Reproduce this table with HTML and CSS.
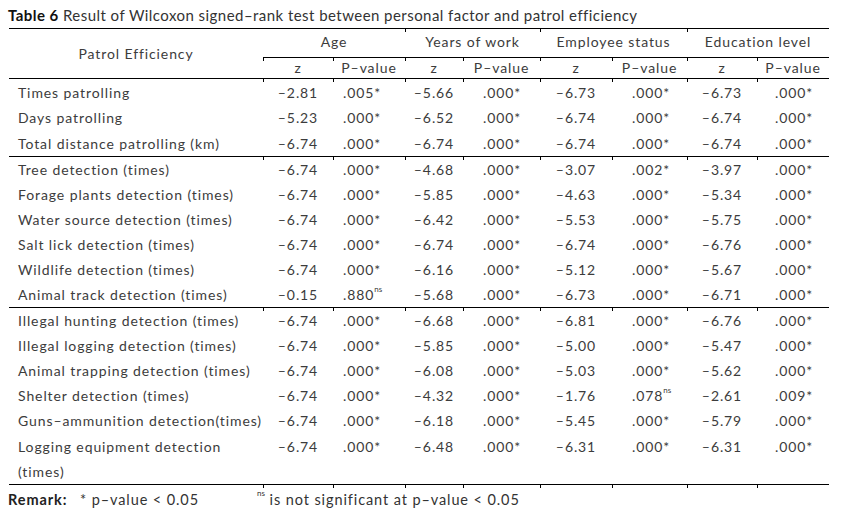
FILE: index.html
```html
<!DOCTYPE html>
<html>
<head>
<meta charset="utf-8">
<link rel="stylesheet" href="styles.css">
</head>
<body>
<div class="page">
  <p class="title"><b>Table 6</b> Result of Wilcoxon signed–rank test between personal factor and patrol efficiency</p>
  <table class="stats">
    <colgroup>
      <col class="c-label"><col class="c-z1"><col class="c-p1"><col class="c-z2"><col class="c-p2"><col class="c-z3"><col class="c-p3"><col class="c-z4"><col class="c-p4">
    </colgroup>
    <thead>
      <tr class="grp">
        <th rowspan="2" class="label-h">Patrol Efficiency</th>
        <th colspan="2" class="tk">Age</th>
        <th colspan="2" class="tk">Years of work</th>
        <th colspan="2" class="tk">Employee status</th>
        <th colspan="2" class="tk">Education level</th>
      </tr>
      <tr class="sub">
        <th class="tk">z</th><th class="tk">P–value</th>
        <th class="tk">z</th><th class="tk">P–value</th>
        <th class="tk">z</th><th class="tk">P–value</th>
        <th class="tk">z</th><th class="tk">P–value</th>
      </tr>
    </thead>
    <tbody class="sec first">
      <tr><td>Times patrolling</td><td>–2.81</td><td>.005*</td><td>–5.66</td><td>.000*</td><td>–6.73</td><td>.000*</td><td>–6.73</td><td>.000*</td></tr>
      <tr><td>Days patrolling</td><td>–5.23</td><td>.000*</td><td>–6.52</td><td>.000*</td><td>–6.74</td><td>.000*</td><td>–6.74</td><td>.000*</td></tr>
      <tr><td>Total distance patrolling (km)</td><td>–6.74</td><td>.000*</td><td>–6.74</td><td>.000*</td><td>–6.74</td><td>.000*</td><td>–6.74</td><td>.000*</td></tr>
    </tbody>
    <tbody class="sec">
      <tr><td>Tree detection (times)</td><td>–6.74</td><td>.000*</td><td>–4.68</td><td>.000*</td><td>–3.07</td><td>.002*</td><td>–3.97</td><td>.000*</td></tr>
      <tr><td>Forage plants detection (times)</td><td>–6.74</td><td>.000*</td><td>–5.85</td><td>.000*</td><td>–4.63</td><td>.000*</td><td>–5.34</td><td>.000*</td></tr>
      <tr><td>Water source detection (times)</td><td>–6.74</td><td>.000*</td><td>–6.42</td><td>.000*</td><td>–5.53</td><td>.000*</td><td>–5.75</td><td>.000*</td></tr>
      <tr><td>Salt lick detection (times)</td><td>–6.74</td><td>.000*</td><td>–6.74</td><td>.000*</td><td>–6.74</td><td>.000*</td><td>–6.76</td><td>.000*</td></tr>
      <tr><td>Wildlife detection (times)</td><td>–6.74</td><td>.000*</td><td>–6.16</td><td>.000*</td><td>–5.12</td><td>.000*</td><td>–5.67</td><td>.000*</td></tr>
      <tr><td>Animal track detection (times)</td><td>–0.15</td><td>.880<sup>ns</sup></td><td>–5.68</td><td>.000*</td><td>–6.73</td><td>.000*</td><td>–6.71</td><td>.000*</td></tr>
    </tbody>
    <tbody class="sec">
      <tr><td>Illegal hunting detection (times)</td><td>–6.74</td><td>.000*</td><td>–6.68</td><td>.000*</td><td>–6.81</td><td>.000*</td><td>–6.76</td><td>.000*</td></tr>
      <tr><td>Illegal logging detection (times)</td><td>–6.74</td><td>.000*</td><td>–5.85</td><td>.000*</td><td>–5.00</td><td>.000*</td><td>–5.47</td><td>.000*</td></tr>
      <tr><td>Animal trapping detection (times)</td><td>–6.74</td><td>.000*</td><td>–6.08</td><td>.000*</td><td>–5.03</td><td>.000*</td><td>–5.62</td><td>.000*</td></tr>
      <tr><td>Shelter detection (times)</td><td>–6.74</td><td>.000*</td><td>–4.32</td><td>.000*</td><td>–1.76</td><td>.078<sup>ns</sup></td><td>–2.61</td><td>.009*</td></tr>
      <tr><td>Guns–ammunition detection(times)</td><td>–6.74</td><td>.000*</td><td>–6.18</td><td>.000*</td><td>–5.45</td><td>.000*</td><td>–5.79</td><td>.000*</td></tr>
      <tr class="tall"><td>Logging equipment detection<br>(times)</td><td>–6.74</td><td>.000*</td><td>–6.48</td><td>.000*</td><td>–6.31</td><td>.000*</td><td>–6.31</td><td>.000*</td></tr>
    </tbody>
    <tfoot>
      <tr class="foot"><td></td><td></td><td></td><td></td><td></td><td></td><td></td><td></td><td></td></tr>
    </tfoot>
  </table>
  <p class="remark"><b class="remark-key">Remark:</b><span class="remark-a">* p–value &lt; 0.05</span><span class="remark-b"><sup>ns</sup> is not significant at p–value &lt; 0.05</span></p>
</div>
</body>
</html>
```

FILE: styles.css
```css
html, body {
  margin: 0;
  padding: 0;
  background: #fff;
}

.page {
  padding: 5px 0 0 8px;
  font-family: "Lato", "Open Sans", sans-serif;
  font-size: 14px;
  letter-spacing: 0.9px;
  color: #3c3c3c;
}

.title {
  margin: 0 0 3px 0;
  line-height: 20px;
  font-size: 15px;
  letter-spacing: 0.45px;
  color: #333;
}

.title b {
  color: #111;
  font-weight: 700;
}

.stats {
  margin-left: 1px;
  width: 820px;
  table-layout: fixed;
  border-collapse: collapse;
  border-top: 1px solid #000;
}

.c-label { width: 254px; }
.c-z1 { width: 70px; }
.c-p1 { width: 72px; }
.c-z2 { width: 58px; }
.c-p2 { width: 77px; }
.c-z3 { width: 72px; }
.c-p3 { width: 75px; }
.c-z4 { width: 70px; }
.c-p4 { width: 72px; }

th {
  font-weight: 400;
  padding: 0;
  text-align: center;
}

.grp th {
  height: 25px;
  padding-bottom: 3px;
  border-bottom: 1px solid #000;
}

.grp th.label-h {
  padding-bottom: 0;
}

.sub th {
  height: 19px;
  padding-bottom: 1px;
  border-bottom: 1px solid #000;
  line-height: 19px;
}

.tk,
.sec tr:first-child td:not(:first-child),
.foot td:not(:first-child) {
  background: linear-gradient(#000, #000) 0 0 / 1px 3px no-repeat;
}

.grp th.tk:nth-child(2) {
  background: none;
}

td {
  padding: 0;
  height: 25.1px;
  text-align: center;
  white-space: nowrap;
}

.first td {
  height: 24.5px;
  padding-top: 1px;
}

td:first-child {
  text-align: left;
  padding-left: 9px;
  white-space: normal;
}

td:nth-child(3) { text-align: left; padding-left: 10px; }
td:nth-child(5) { text-align: left; padding-left: 20px; }
td:nth-child(7) { text-align: left; padding-left: 20px; }
td:nth-child(9) { text-align: left; padding-left: 18px; }

.tall td {
  vertical-align: top;
  height: 50.2px;
  line-height: 25.1px;
}

.sec {
  border-bottom: 1px solid #000;
}

.foot td {
  height: 4px;
}

sup {
  font-size: 8px;
  letter-spacing: 0;
  vertical-align: top;
  line-height: 8px;
  position: relative;
  top: -1px;
}

.remark {
  margin: 1px 0 0 0;
  line-height: 20px;
  font-size: 14.5px;
  display: flex;
  color: #333;
}

.remark-key {
  font-weight: 700;
  color: #222;
  width: 72px;
}

.remark-a {
  width: 177px;
}
```
